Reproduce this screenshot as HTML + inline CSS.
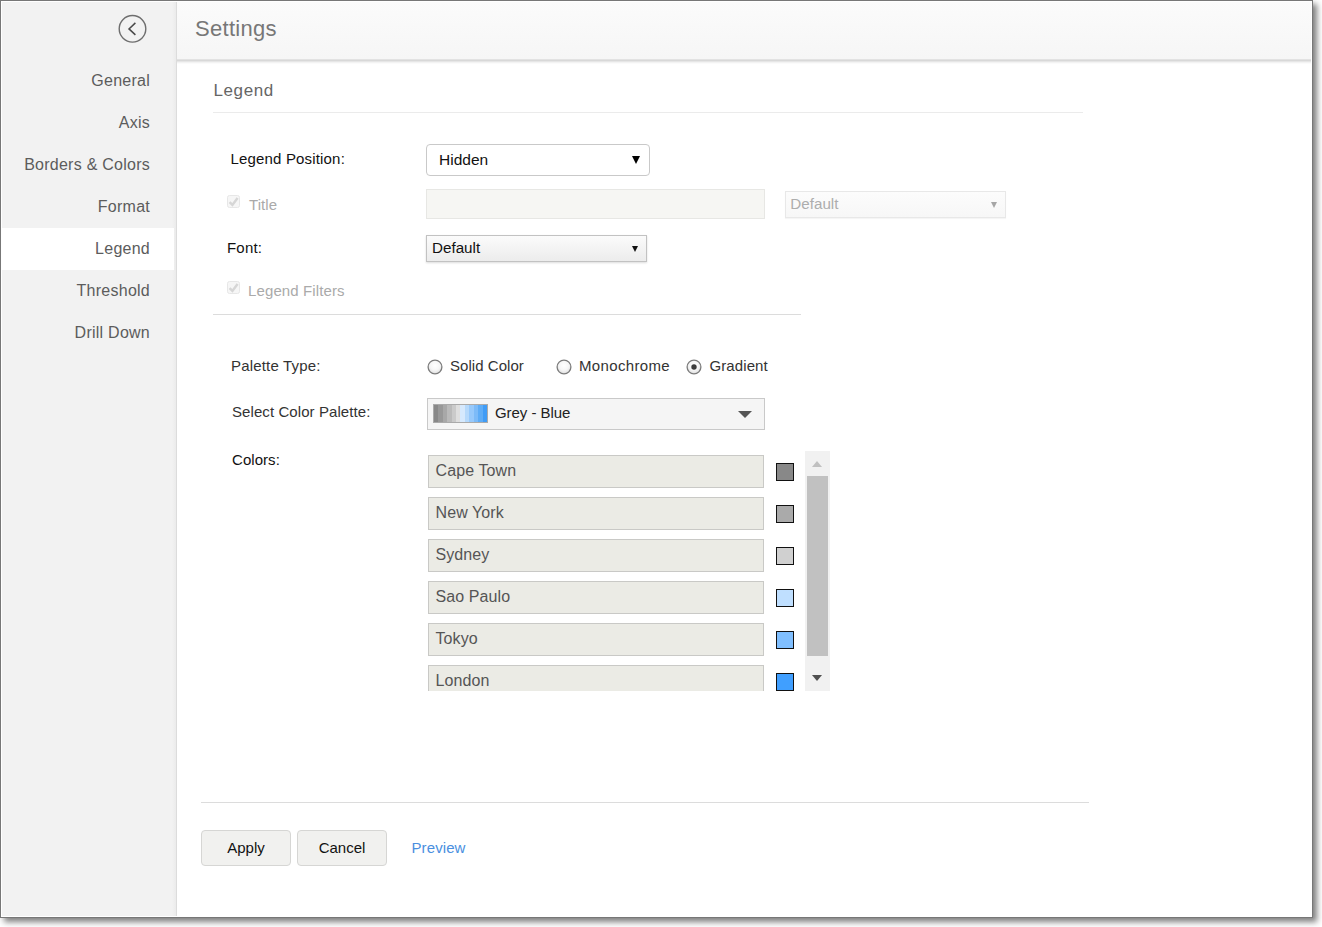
<!DOCTYPE html>
<html>
<head>
<meta charset="utf-8">
<title>Settings</title>
<style>
*{box-sizing:border-box;margin:0;padding:0}
html,body{width:1322px;height:927px;background:#fff;overflow:hidden}
body{font-family:"Liberation Sans",sans-serif;position:relative;color:#333}
.abs{position:absolute}
#dlg{position:absolute;left:0;top:0;width:1313px;height:918px;border:1px solid #777;background:#fff;box-shadow:4px 4px 6px rgba(0,0,0,.5)}
#inner{position:absolute;left:0;top:0;width:1311px;height:916px;border:1px solid #fff;overflow:hidden}
#side{position:absolute;left:0;top:0;width:175px;height:914px;background:linear-gradient(90deg,#f2f2f2 170px,#ebebeb 174px);border-right:1px solid #dcdcdc}
#side .it{position:absolute;left:0;width:172px;height:42px;line-height:42px;text-align:right;padding-right:24px;font-size:16px;letter-spacing:.25px;color:#5c5c5c}
#side .it.on{background:#fff}
#hdr{position:absolute;left:175px;top:0;width:1140px;height:57px;background:linear-gradient(#fbfbfb,#f6f6f6)}
#hsh{position:absolute;left:175px;top:57px;width:1140px;height:5px;background:linear-gradient(#e2e2e2 0 20%,#d8d8d8 20% 40%,#e6e6e6 40% 60%,#f3f3f3 60% 80%,#fbfbfb 80% 100%)}
#hdr span{position:absolute;left:18px;top:14px;font-size:22px;line-height:26px;color:#777;letter-spacing:.3px}
.lbl{position:absolute;font-size:15px;line-height:18px;white-space:nowrap;letter-spacing:.05px}
.hr{position:absolute;height:1px;background:#e2e2e2}

#pg{position:absolute;left:-2px;top:-2px;width:1322px;height:927px}
#pg>*{position:absolute}
.t{white-space:nowrap;font-size:15px;line-height:18px;letter-spacing:.05px}
.blk{color:#111}
.dim{color:#aaa}
.sel1{left:426px;top:144px;width:224px;height:32px;border:1px solid #c9c9c9;border-radius:4px;background:#fff}
.sel1 span{position:absolute;left:12px;top:5px;font-size:15.5px;line-height:20px;color:#111}
.tri{position:absolute;width:0;height:0;border-style:solid;border-color:transparent}
.inp0{left:426px;top:189px;width:339px;height:30px;background:#f6f6f3;border:1px solid #e7e7e4}
.sel2{left:785px;top:191px;width:221px;height:27px;border:1px solid #e8e8e8;background:linear-gradient(#fcfcfc,#f7f7f7);box-shadow:0 1px 1px rgba(0,0,0,.04)}
.sel2 span{position:absolute;left:4.3px;top:3px;font-size:15.2px;line-height:18px;color:#adadad}
.sel3{left:426px;top:235px;width:221px;height:27px;border:1px solid #c2c2c2;background:linear-gradient(#fbfbfb,#ececec);box-shadow:0 1px 2px rgba(0,0,0,.14)}
.sel3 span{position:absolute;left:5px;top:3px;font-size:15.2px;line-height:18px;color:#111}
.cb{width:13px;height:13px;border:1px solid #e7e7e7;border-radius:2.5px;background:#f6f6f6}
.pal{left:427px;top:398px;width:338px;height:32px;border:1px solid #c9c9c9;background:#f5f5f5}
.ci{left:428px;width:336px;height:33px;border:1px solid #c9c9c6;background:#ebebe5;font-size:16px;line-height:20px;color:#555;padding:5px 0 0 6.5px;letter-spacing:.1px;white-space:nowrap}
.sw{left:776px;width:18px;height:18px;border:1px solid #111}
.btn{top:830px;width:90px;height:36px;border:1px solid #d6d6d4;border-radius:4px;background:#f1f1ef;color:#111;font-size:15px;line-height:34px;text-align:center}
</style>
</head>
<body>
<div id="dlg"><div id="inner">
  <div id="side">
    <svg class="abs" style="left:115px;top:12px" width="32" height="32" viewBox="0 0 32 32"><circle cx="15.5" cy="14.8" r="13.3" fill="none" stroke="#6e6e6e" stroke-width="1.4"/><path d="M18.4 8.9 L12 14.9 L18.4 20.9" fill="none" stroke="#4a4a4a" stroke-width="1.5"/></svg>
    <div class="it" style="top:58px">General</div>
    <div class="it" style="top:100px">Axis</div>
    <div class="it" style="top:142px">Borders &amp; Colors</div>
    <div class="it" style="top:184px">Format</div>
    <div class="it on" style="top:226px">Legend</div>
    <div class="it" style="top:268px">Threshold</div>
    <div class="it" style="top:310px">Drill Down</div>
  </div>
  <div id="hdr"><span>Settings</span></div><div id="hsh"></div>

  <div id="pg">
    <div class="t" style="left:213.5px;top:81px;font-size:17px;line-height:20px;color:#666;letter-spacing:.6px">Legend</div>
    <div class="hr" style="left:213px;top:112px;width:870px;background:#ebebeb"></div>

    <div class="t blk" style="left:230.5px;top:150px;letter-spacing:.17px">Legend Position:</div>
    <div class="sel1"><span>Hidden</span><i class="tri" style="left:205px;top:11px;border-width:8px 4px 0 4px;border-top-color:#000"></i></div>

    <div class="cb" style="left:227px;top:195px"><svg width="11" height="11" viewBox="0 0 11 11" style="position:absolute;left:0;top:0"><path d="M1.6 6.2 L4.4 8.9 L9.6 2" fill="none" stroke="#d6d6d6" stroke-width="2.5"/></svg></div>
    <div class="t dim" style="left:249px;top:196px">Title</div>
    <div class="inp0"></div>
    <div class="sel2"><span>Default</span><i class="tri" style="left:205px;top:10px;border-width:6px 3.5px 0 3.5px;border-top-color:#a6a6a6"></i></div>

    <div class="t blk" style="left:227px;top:239px;letter-spacing:.2px">Font:</div>
    <div class="sel3"><span>Default</span><i class="tri" style="left:205px;top:10px;border-width:6px 3.5px 0 3.5px;border-top-color:#111"></i></div>

    <div class="cb" style="left:227px;top:281px"><svg width="11" height="11" viewBox="0 0 11 11" style="position:absolute;left:0;top:0"><path d="M1.6 6.2 L4.4 8.9 L9.6 2" fill="none" stroke="#d6d6d6" stroke-width="2.5"/></svg></div>
    <div class="t dim" style="left:248px;top:282px;letter-spacing:.12px">Legend Filters</div>
    <div class="hr" style="left:213px;top:314px;width:588px;background:#dcdcdc"></div>

    <div class="t" style="left:231px;top:357px;letter-spacing:.17px">Palette Type:</div>
    <svg style="left:0;top:0" width="0" height="0"><defs><radialGradient id="rg" cx="50%" cy="40%" r="60%"><stop offset="0" stop-color="#ffffff"/><stop offset=".55" stop-color="#f6f6f6"/><stop offset="1" stop-color="#dddddd"/></radialGradient></defs></svg><svg style="left:424.8px;top:356.6px" width="20" height="20" viewBox="0 0 20 20"><circle cx="10" cy="10" r="6.9" fill="url(#rg)" stroke="#7c7c7c" stroke-width="1.3"/></svg>
    <div class="t" style="left:450px;top:357px">Solid Color</div>
    <svg style="left:554.4px;top:356.6px" width="20" height="20" viewBox="0 0 20 20"><circle cx="10" cy="10" r="6.9" fill="url(#rg)" stroke="#7c7c7c" stroke-width="1.3"/></svg>
    <div class="t" style="left:579px;top:357px;letter-spacing:.35px">Monochrome</div>
    <svg style="left:683.9px;top:356.6px" width="20" height="20" viewBox="0 0 20 20"><circle cx="10" cy="10" r="6.9" fill="url(#rg)" stroke="#7c7c7c" stroke-width="1.3"/><circle cx="10" cy="10" r="2.7" fill="#3c3c3c"/></svg>
    <div class="t" style="left:709.5px;top:357px;letter-spacing:.1px">Gradient</div>

    <div class="t" style="left:232px;top:403px;letter-spacing:.08px">Select Color Palette:</div>
    <div class="pal">
      <div style="position:absolute;left:5px;top:5px;width:55px;height:19px;border:1px solid #aaa;background:linear-gradient(90deg,#888888 0.00% 8.33%,#989898 8.33% 16.67%,#a8a8a8 16.67% 25.00%,#bababa 25.00% 33.33%,#cacaca 33.33% 41.67%,#dedede 41.67% 50.00%,#d6e9fd 50.00% 58.33%,#b6d9fb 58.33% 66.67%,#97c9fb 66.67% 75.00%,#7dbbf8 75.00% 83.33%,#5eacf6 83.33% 91.67%,#409cf6 91.67% 100.00%)"></div>
      <span class="t" style="position:absolute;left:67px;top:5px;color:#222;letter-spacing:-.05px">Grey - Blue</span>
      <i class="tri" style="left:309.5px;top:12px;border-width:7.5px 7px 0 7px;border-top-color:#555"></i>
    </div>

    <div class="t blk" style="left:232px;top:451px">Colors:</div>
    <div id="list" style="left:420px;top:451px;width:412px;height:240px;overflow:hidden">
      <div id="lin" style="position:absolute;left:-420px;top:-451px;width:1322px;height:927px">
        <div class="ci abs" style="top:455px">Cape Town</div><div class="sw abs" style="top:463px;background:#888"></div>
        <div class="ci abs" style="top:497px">New York</div><div class="sw abs" style="top:505px;background:#aaa"></div>
        <div class="ci abs" style="top:539px">Sydney</div><div class="sw abs" style="top:547px;background:#d0d0d0"></div>
        <div class="ci abs" style="top:581px">Sao Paulo</div><div class="sw abs" style="top:589px;background:#bfdfff"></div>
        <div class="ci abs" style="top:623px">Tokyo</div><div class="sw abs" style="top:631px;background:#80bfff"></div>
        <div class="ci abs" style="top:665px">London</div><div class="sw abs" style="top:673px;background:#409fff"></div>
        <div class="abs" style="left:805px;top:451px;width:25px;height:240px;background:#f1f1f1"></div>
        <div class="abs" style="left:807px;top:476px;width:21px;height:180px;background:#c1c1c1"></div>
        <i class="tri" style="left:812px;top:461px;border-width:0 5.5px 6px 5.5px;border-bottom-color:#c0c0c0"></i>
        <i class="tri" style="left:812px;top:675px;border-width:6px 5.5px 0 5.5px;border-top-color:#505050"></i>
      </div>
    </div>

    <div class="hr" style="left:201px;top:802px;width:888px;background:#dcdcdc"></div>
    <div class="btn" style="left:201px">Apply</div>
    <div class="btn" style="left:297px">Cancel</div>
    <div class="t" style="left:411.5px;top:839px;color:#4a8fe0;letter-spacing:.1px">Preview</div>
  </div>
</div></div>
</body>
</html>
